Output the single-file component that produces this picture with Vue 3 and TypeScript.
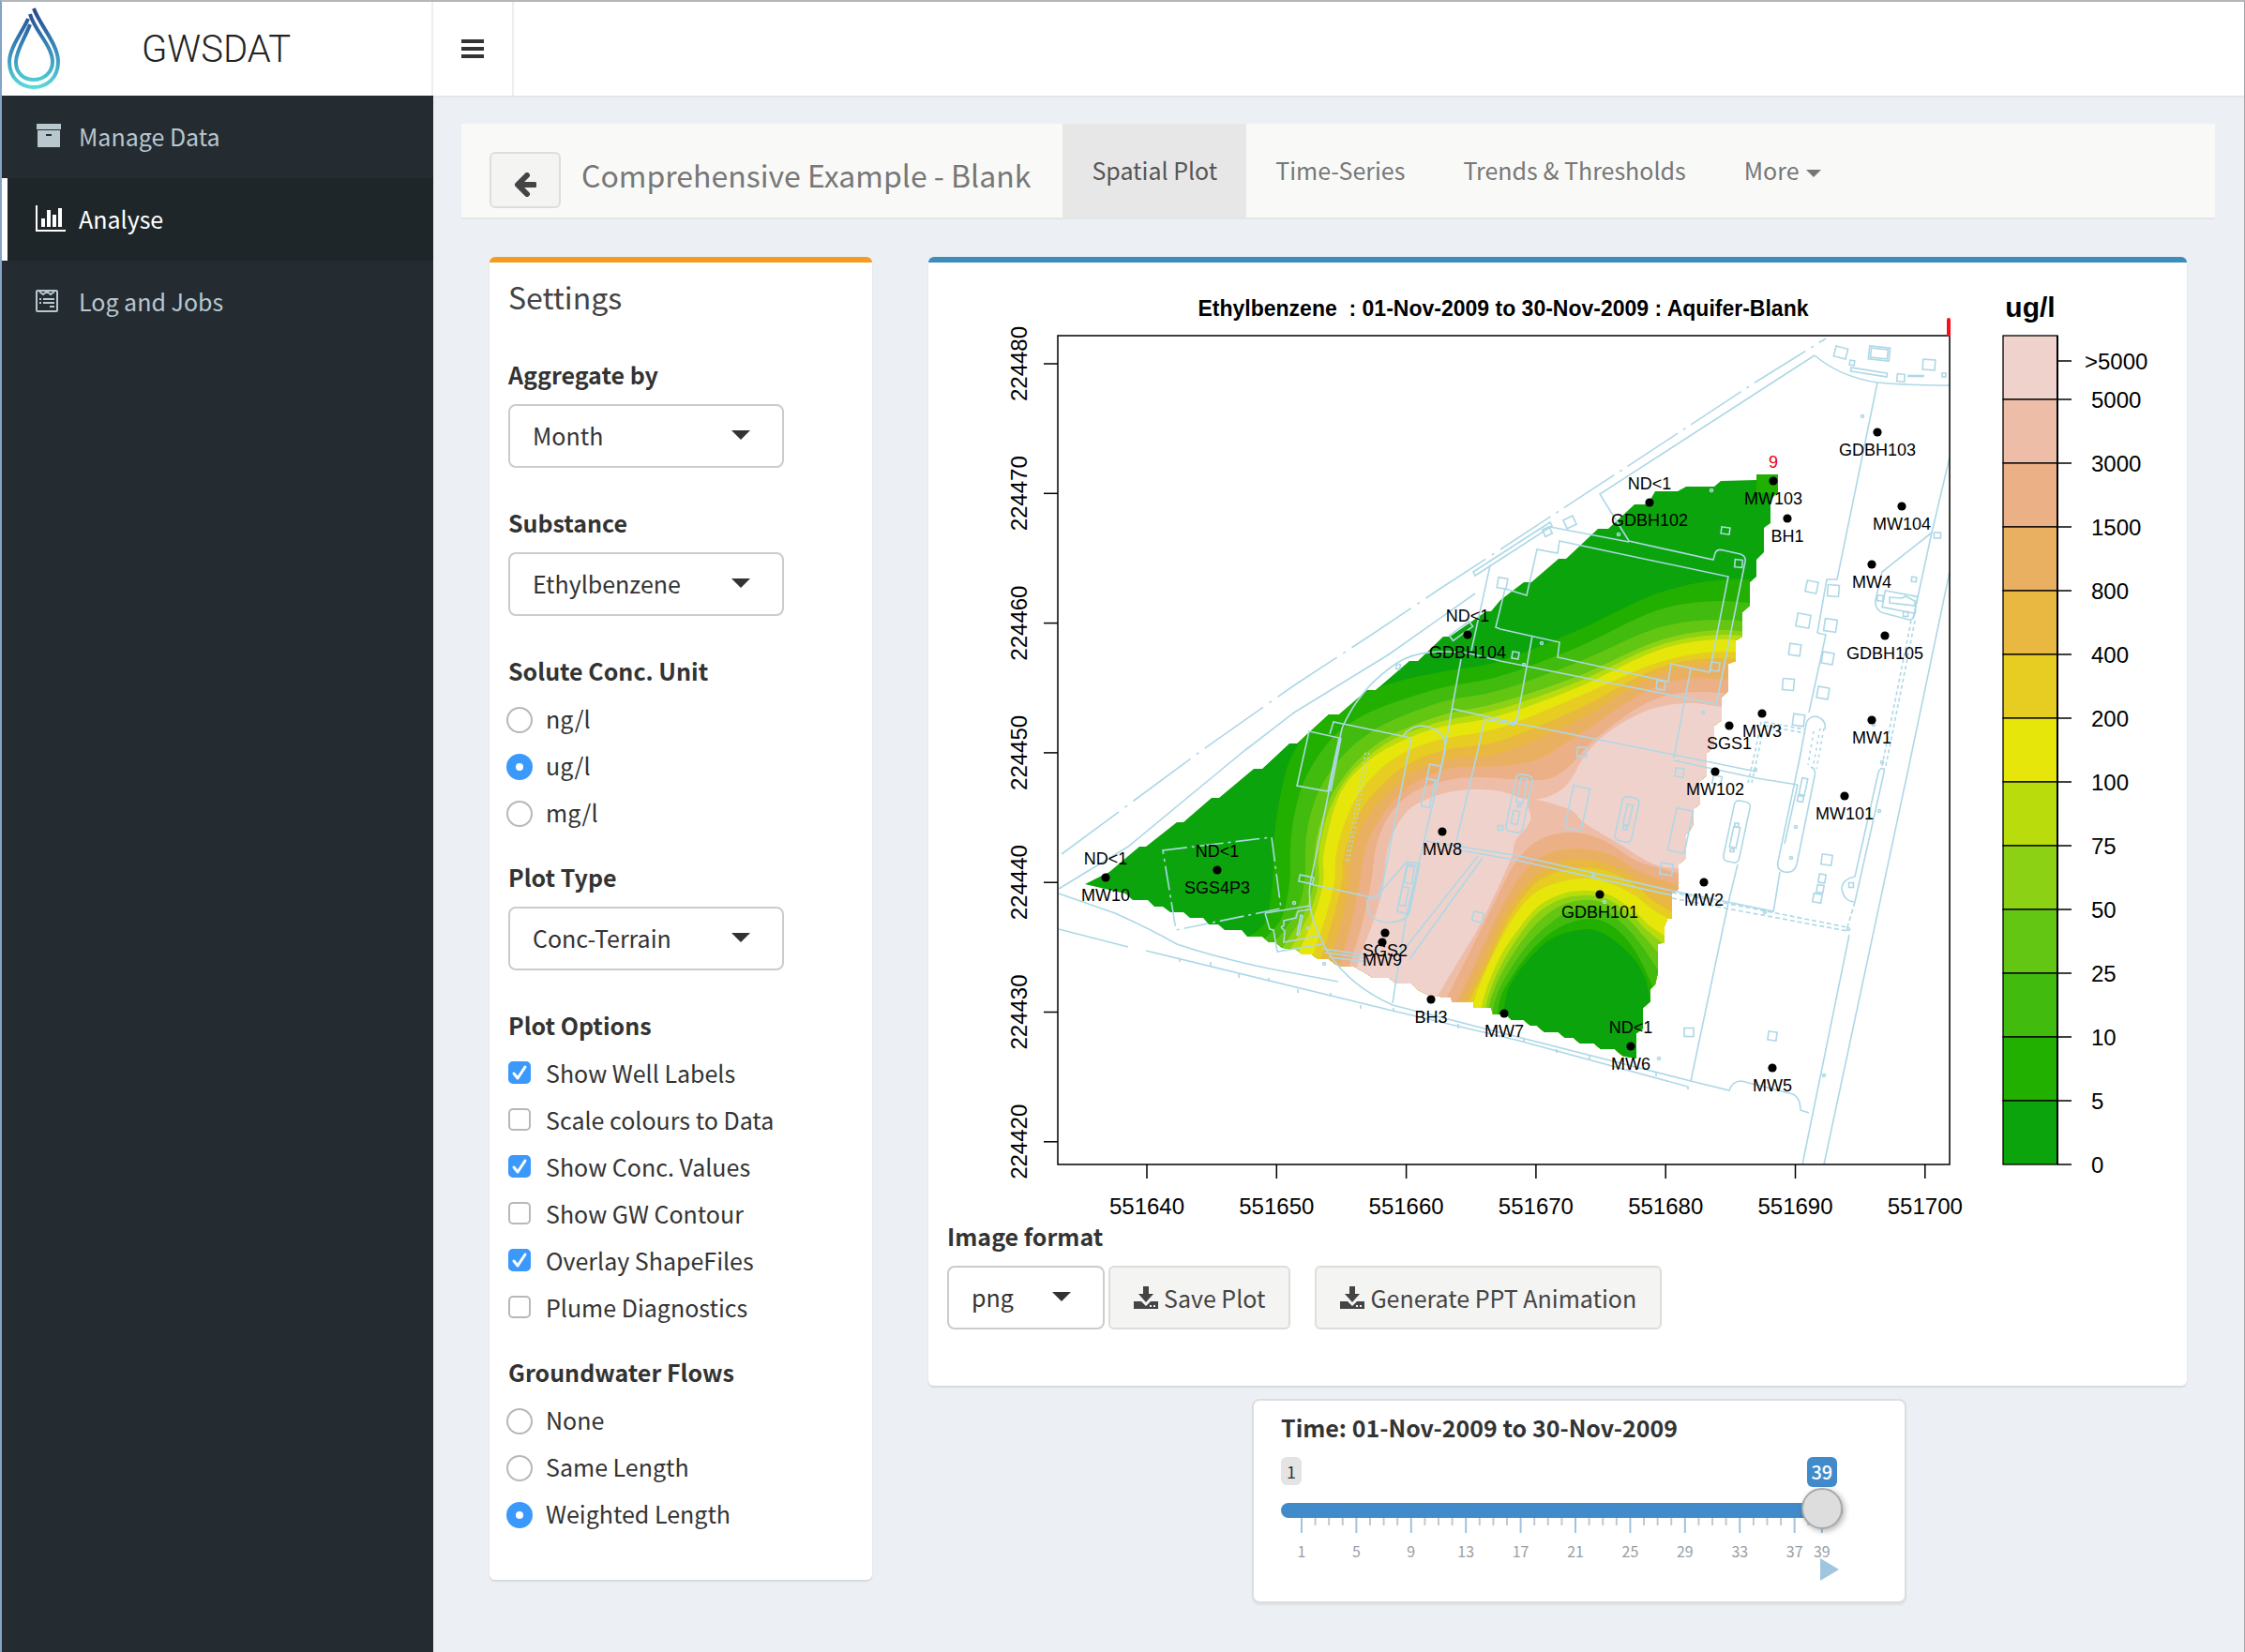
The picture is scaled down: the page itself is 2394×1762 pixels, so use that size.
<script setup lang="ts">
import { ref, computed } from 'vue'

type Point = [number, number]
interface Well { name: string; x: number; y: number; value?: string; detected?: boolean }
interface Level { color: string; points: Point[] }

const aggregate = ref('Month')
const substance = ref('Ethylbenzene')
const unit = ref('ug/l')
const plotType = ref('Conc-Terrain')
const imageFormat = ref('png')
const flow = ref('Weighted Length')
const step = ref(39)
const shown = ref<string[]>(['Show Well Labels', 'Show Conc. Values', 'Overlay ShapeFiles'])

const units = ['ng/l', 'ug/l', 'mg/l']
const plotOptions = ['Show Well Labels', 'Scale colours to Data', 'Show Conc. Values', 'Show GW Contour', 'Overlay ShapeFiles', 'Plume Diagnostics']
const flows = ['None', 'Same Length', 'Weighted Length']

const sliderTicks = Array.from({ length: 39 }, (_, i) => ({
  n: i + 1,
  x: 22 + (i * 557) / 38,
  major: i % 4 === 0 || i === 38,
}))
const badgeLeft = computed(() => `${((step.value - 1) / 38) * 100}%`)

function smooth(points: Point[]): string {
  let d = `M${points[0][0]} ${points[0][1]}`
  for (let i = 0; i < points.length - 1; i++) {
    const a = points[Math.max(i - 1, 0)]
    const b = points[i]
    const c = points[i + 1]
    const e = points[Math.min(i + 2, points.length - 1)]
    const r = (v: number) => Math.round(v * 10) / 10
    d += `C${r(b[0] + (c[0] - a[0]) / 6)} ${r(b[1] + (c[1] - a[1]) / 6)} ${r(c[0] - (e[0] - b[0]) / 6)} ${r(c[1] - (e[1] - b[1]) / 6)} ${c[0]} ${c[1]}`
  }
  return d
}
function parse(text: string): Point[] {
  return text.trim().split(/\s+/).map((p) => p.split(',').map(Number) as Point)
}
function level(color: string, text: string): Level {
  return { color, points: parse(text) }
}

// Concentration classes, highest first, as they are stacked in the key.
const legend = [
  { color: '#f0d2cc', label: '5000' },
  { color: '#eebda8', label: '3000' },
  { color: '#ecb086', label: '1500' },
  { color: '#eab062', label: '800' },
  { color: '#e8b840', label: '400' },
  { color: '#e7cc22', label: '200' },
  { color: '#e6e60b', label: '100' },
  { color: '#b9dc0c', label: '75' },
  { color: '#8dd114', label: '50' },
  { color: '#62c612', label: '25' },
  { color: '#41bb0d', label: '10' },
  { color: '#21af00', label: '5' },
  { color: '#0ca40c', label: '0' },
]

const plume: Level[] = [
  level('#21af00', '1900,622 1840,618 1767,633 1683,672 1600,705 1540,716 1490,727 1440,745 1405,770 1378,805 1365,850 1358,900 1357,941 1348,985 1320,1005'),
  level('#41bb0d', '1900,648 1835,641 1767,651 1683,690 1600,721 1540,733 1490,748 1450,765 1418,790 1392,830 1380,870 1376,905 1375,941 1366,980 1340,1010'),
  level('#62c612', '1900,668 1835,661 1767,670 1683,706 1600,736 1540,748 1490,766 1460,782 1432,806 1408,840 1396,875 1392,905 1391,941 1381,975 1355,1010'),
  level('#8dd114', '1900,680 1835,672 1767,684 1683,721 1600,749 1540,762 1490,781 1460,800 1438,822 1418,852 1406,885 1402,910 1401,941 1390,975 1365,1015'),
  level('#b9dc0c', '1900,684 1835,677 1767,689 1683,727 1600,756 1535,770 1487,788 1458,808 1436,830 1420,858 1411,885 1406,912 1406,941 1396,975 1373,1018'),
  level('#e6e60b', '1900,690 1835,682 1767,694 1683,733 1600,763 1530,777 1483,796 1455,815 1434,838 1423,862 1416,888 1411,915 1411,941 1401,978 1382,1022'),
  level('#e7cc22', '1900,703 1835,695 1767,707 1683,743 1600,776 1535,789 1495,804 1468,824 1448,848 1437,870 1429,893 1424,917 1423,941 1413,980 1397,1028'),
  level('#e8b840', '1900,712 1835,702 1767,713 1683,756 1600,790 1540,800 1502,815 1477,834 1457,856 1445,877 1437,898 1432,920 1431,941 1421,982 1406,1030'),
  level('#eab062', '1900,718 1835,708 1767,720 1683,768 1600,803 1545,810 1508,823 1484,842 1465,862 1452,882 1445,902 1440,922 1438,945 1430,985 1414,1035'),
  level('#ecb086', '1900,738 1835,724 1767,732 1683,784 1640,810 1600,817 1550,819 1514,832 1490,850 1474,870 1462,890 1455,912 1450,941 1441,985 1427,1035'),
  level('#eebda8', '1900,755 1835,739 1767,745 1705,785 1670,820 1643,832 1578,829 1545,832 1515,841 1495,854 1478,875 1467,905 1462,941 1452,988 1437,1035'),
  level('#f0d2cc', '1900,765 1836,754 1800,750 1765,755 1735,768 1710,785 1690,806 1668,840 1635,853 1600,844 1571,842 1545,845 1520,853 1500,866 1485,890 1478,915 1474,950 1463,987 1453,1013 1445,1036'),
]
const hollow: Level[] = [
  level('#eebda8', '1525,1075 1542,1047 1560,1017 1578,987 1596,950 1612,914 1616,897 1632,875 1631,853 1673,863 1690,878 1727,900 1767,923 1810,927'),
  level('#ecb086', '1535,1080 1555,1040 1575,1000 1595,960 1612,926 1627,907 1643,895 1667,888 1693,890 1717,900 1743,917 1767,925 1810,937'),
  level('#eab062', '1548,1080 1572,1030 1590,990 1608,955 1625,930 1643,914 1667,906 1695,906 1723,914 1750,930 1800,948'),
  level('#e8b840', '1554,1080 1578,1035 1600,985 1620,953 1640,932 1665,919 1695,917 1720,924 1745,937 1765,948 1800,960'),
  level('#e7cc22', '1560,1080 1583,1035 1606,985 1628,952 1648,935 1672,927 1700,926 1722,932 1745,945 1765,962 1800,982'),
  level('#e6e60b', '1566,1085 1580,1045 1600,1003 1620,970 1640,950 1667,940 1693,937 1717,942 1743,955 1767,973 1800,990'),
  level('#b9dc0c', '1576,1090 1585,1055 1600,1020 1620,990 1640,967 1667,953 1693,950 1717,955 1743,972 1760,988 1790,1008'),
  level('#8dd114', '1580,1095 1588,1060 1602,1027 1622,995 1642,972 1668,958 1694,955 1716,960 1740,976 1757,993 1785,1015'),
  level('#62c612', '1583,1095 1591,1062 1604,1033 1625,1001 1645,979 1669,964 1694,960 1715,965 1737,981 1754,1000 1780,1030'),
  level('#41bb0d', '1589,1097 1595,1065 1608,1038 1628,1009 1648,989 1671,973 1694,968 1714,973 1733,988 1750,1008 1775,1045'),
  level('#21af00', '1594,1099 1600,1065 1612,1042 1631,1016 1651,997 1672,985 1694,980 1713,984 1731,998 1747,1020 1765,1058'),
  level('#0ca40c', '1600,1100 1607,1060 1617,1040 1633,1020 1657,1000 1693,991 1717,1000 1740,1020 1753,1040 1759,1063 1762,1085'),
]

const hull =
  '1157,943 1183,930 1215,903 1222,903 1255,877 1262,877 1292,851 1300,851 1337,820 1346,820 1375,793 1383,793 1417,762 1428,762 1458,736 1467,736 1503,705 1512,705 1539,679 1546,679 1585,652 1590,652 1600,640 1625,621 1633,621 1662,596 1670,596 1704,564 1715,564 1743,538 1757,538 1765,524 1789,524 1798,519 1828,519 1835,513 1873,512 1873,506 1896,506 1896,525 1888,533 1888,558 1881,563 1881,589 1873,597 1873,615 1866,621 1866,646 1858,653 1858,679 1851,683 1851,705 1843,708 1843,737 1836,744 1836,768 1828,774 1828,797 1820,803 1820,827 1813,833 1813,857 1806,863 1805,882 1798,890 1798,915 1790,922 1790,948 1783,953 1783,979 1778,980 1775,988 1775,1005 1768,1007 1768,1037 1765,1050 1760,1055 1760,1068 1752,1075 1752,1097 1745,1102 1745,1129 1730,1126 1722,1119 1707,1119 1700,1113 1685,1113 1678,1107 1669,1107 1662,1101 1647,1101 1639,1094 1632,1094 1625,1088 1612,1088 1606,1082 1592,1082 1590,1075 1572,1075 1571,1069 1549,1069 1547,1064 1524,1062 1512,1056 1505,1049 1489,1049 1481,1043 1464,1043 1453,1036 1444,1031 1426,1030 1417,1023 1405,1023 1399,1018 1389,1018 1381,1012 1367,1011 1360,1005 1353,1005 1346,999 1330,999 1324,992 1306,992 1299,986 1289,986 1283,979 1269,979 1262,973 1248,973 1240,967 1231,967 1224,960 1208,960 1200,953 1178,948'

const wells: Well[] = [
  { name: 'GDBH103', x: 2002, y: 461 },
  { name: 'MW104', x: 2028, y: 540 },
  { name: 'MW4', x: 1996, y: 602 },
  { name: 'GDBH105', x: 2010, y: 678 },
  { name: 'MW1', x: 1996, y: 768 },
  { name: 'MW3', x: 1879, y: 761 },
  { name: 'SGS1', x: 1844, y: 774 },
  { name: 'BH1', x: 1906, y: 553 },
  { name: 'MW103', x: 1891, y: 513, value: '9', detected: true },
  { name: 'GDBH102', x: 1759, y: 536, value: 'ND<1' },
  { name: 'GDBH104', x: 1565, y: 677, value: 'ND<1' },
  { name: 'MW102', x: 1829, y: 823 },
  { name: 'MW101', x: 1967, y: 849 },
  { name: 'MW2', x: 1817, y: 941 },
  { name: 'GDBH101', x: 1706, y: 954 },
  { name: 'MW6', x: 1739, y: 1116, value: 'ND<1' },
  { name: 'MW5', x: 1890, y: 1139 },
  { name: 'MW7', x: 1604, y: 1081 },
  { name: 'MW8', x: 1538, y: 887 },
  { name: 'MW10', x: 1179, y: 936, value: 'ND<1' },
  { name: 'SGS4P3', x: 1298, y: 928, value: 'ND<1' },
  { name: 'SGS2', x: 1477, y: 995 },
  { name: 'MW9', x: 1474, y: 1005 },
  { name: 'BH3', x: 1526, y: 1066 },
]

const yTicks = [224480, 224470, 224460, 224450, 224440, 224430, 224420].map((v, i) => ({ v, y: 388 + i * 138.3 }))
const xTicks = [551640, 551650, 551660, 551670, 551680, 551690, 551700].map((v, i) => ({ v, x: 1223 + i * 138.3 }))

// Site survey: solid lines, then broken lines, then buildings as [x, y, width, height, angle, radius].
const siteLines = [
  'M1129 948L1203 903L1289 832L1328 800L1380 760L1481 698L1573 633',
  'M1571 610L1653 557L1655 561L1573 614Z',
  'M1653 562L1737 578M1935 379L1706 527L1737 577L1827 597L1829 590Q1831 585 1838 587L1856 591Q1862 593 1861 599L1830 752',
  'M1935 379Q1962 402 2002 408Q2035 411 2079 411',
  'M2002 408L1959 618H1948L1938 675L1947 677L1929 760',
  'M1663 577L1843 615L1823 717L1782 708L1779 727L1661 701L1663 685L1600 671L1595 669L1605 628L1628 635L1639 586L1661 590Z',
  'M1567 697L1600 705L1830 751M1589 603L1569 694M1558 703L1537 818L1499 980L1485 1070',
  'M1634 678L1617 772M1549 756L1620 772L1785 805L1873 823M1785 811L1873 830L1917 837M1803 713L1785 808',
  'M1569 697Q1515 690 1490 707Q1450 733 1431 777L1422 820L1397 943Q1394 970 1405 993Q1425 1045 1485 1072L1583 1097L1803 1153L1844 1163Q1847 1153 1857 1153L1912 1167Q1920 1171 1920 1184L1929 1187',
  'M1129 991L1203 1010M1222 1014L1485 1078L1620 1110L1800 1159V1162',
  'M1129 953L1189 974Q1225 990 1255 1007Q1300 1022 1353 1033L1427 1047',
  'M1396 780L1428 787L1416 844L1383 838ZM1418 783L1422 770L1505 787L1471 960M1430 787L1419 844',
  'M1496 785Q1504 774 1517 774Q1543 778 1541 800L1537 818M1576 800L1553 897M1576 800L1583 767L1615 773L1617 765',
  'M1521 897L1620 913L1783 950L1891 972M1553 906L1620 918L1783 955',
  'M1576 913L1494 1017M1581 915L1503 1023',
  'M1397 943L1467 958M1467 957L1458 960Q1456 984 1483 984Q1500 982 1503 973L1514 921L1500 919Z',
  'M1349 974L1397 966M1349 974L1354 991L1358 992L1362 1015L1410 1007M1366 989L1369 987V982L1382 979L1384 972L1397 970M1366 989L1370 993L1369 1005L1406 998M1387 976L1389 977L1385 997H1383Z',
  'M1410 1012L1455 1018M1413 1016L1458 1022M1417 1021L1460 1026',
  'M2079 488L2060 568L2040 660M2079 610L2035 820L1945 1242M1972 997L1922 1242',
  'M2060 568L2007 610L2000 640Q1999 651 2009 654L2036 661Q2041 662 2043 650',
  'M2003 824L1978 935M2009 824L1978 962M2003 824Q2005 818 2009 820V824M1978 935Q1964 938 1964 948Q1966 961 1977 962',
  'M1853 922L1843 963L1803 1153M1898 930L1891 973',
  'M1917 820L1926 772Q1928 764 1937 764Q1948 768 1946 778M1921 800L1896 919Q1894 928 1903 930Q1913 932 1916 922L1935 828Q1937 820 1931 818',
  'M1917 837L1903 900',
  'M1258 1022V1026M1291 1031V1026M1321 1039V1043M1353 1047V1043M1384 1055V1059M1419 1063V1059M1451 1072V1076M1486 1079V1075M1555 1097V1092M1625 1108V1112M1660 1119V1123M1695 1126V1130M1766 1144V1148',
  'M2028 638L2032 636L2042 641V646L2015 643V637Z',
]
const brokenLines = [
  { d: 'M1132 911L1282 800L1380 731L1464 676L1537 627L1600 586', dash: '76 8 3 8' },
  { d: 'M1600 586L1664 544L1733 499L1803 453L1873 407L1947 361', dash: '64 7 3 7' },
  { d: 'M1240 907L1356 893L1366 969L1254 992Z', dash: '26 5 3 5' },
  { d: 'M2038 662L2007 817M2042 662L2011 817', dash: '4 3' },
  { d: 'M1882 770L1925 778M1882 774L1925 782M1882 770L1868 835M1878 770L1872 800L1864 835', dash: '4 3' },
  { d: 'M1945 777L1937 820M1941 777L1933 820M1934 780L1928 816', dash: '3 4' },
  { d: 'M1783 952L1970 989M1783 958L1970 993M1978 962L1970 989', dash: '5 3' },
  { d: 'M1456 803L1435 920M1460 803L1438 920', dash: '2 3' },
]
const buildings: number[][] = [
  [1932, 626, 12, 12, 12, 0], [1955, 630, 12, 12, 5, 0], [1923, 662, 14, 14, 10, 0], [1952, 667, 13, 13, 8, 0],
  [1914, 693, 12, 12, 8, 0], [1949, 702, 12, 12, 10, 0], [1907, 730, 12, 12, 5, 0], [1944, 739, 12, 12, 10, 0],
  [1918, 768, 12, 12, 8, 0], [1963, 376, 13, 11, 14, 0], [2004, 377, 22, 14, 6, 0], [2004, 377, 18, 10, 6, 0],
  [2057, 389, 13, 11, 4, 0], [2027, 403, 8, 8, 5, 0], [2073, 400, 4, 4, 0, 0], [1975, 387, 5, 5, 8, 0],
  [1993, 397, 39, 4, 9, 0], [2043, 401, 16, 1, 0, 0], [1674, 557, 11, 10, -25, 0], [1650, 567, 8, 8, -25, 0],
  [1840, 566, 9, 7, 8, 0], [1854, 601, 8, 8, 5, 0], [1616, 699, 7, 7, 10, 0], [1771, 731, 9, 9, 5, 0],
  [1829, 711, 9, 9, 8, 0], [1687, 802, 10, 10, 5, 0], [2041, 618, 5, 5, 8, 0], [2066, 571, 7, 6, 0, 0],
  [1791, 824, 9, 9, 8, 0], [1831, 832, 9, 9, 12, 0], [1777, 927, 13, 12, 8, 0], [1948, 917, 11, 11, 8, 0],
  [1943, 937, 7, 9, 10, 0], [1941, 948, 7, 8, 10, 0], [1938, 958, 9, 9, 10, 0], [1801, 1101, 10, 9, 0, 0],
  [1890, 1105, 9, 9, 8, 0], [1974, 944, 5, 5, 0, 0], [1576, 978, 11, 10, 14, 0], [1602, 622, 10, 11, 10, 0],
  [1393, 938, 15, 7, 12, 0], [1558, 673, 26, 7, -36, 0], [1491, 711, 4, 5, 10, 0], [1600, 883, 5, 5, 0, 0],
  [1852, 887, 17, 66, 12, 5], [1850, 893, 7, 22, 12, 0], [1852, 880, 4, 4, 0, 0], [1847, 907, 4, 3, 0, 0],
  [1735, 874, 18, 48, 12, 5], [1736, 869, 6, 22, 12, 0], [1733, 883, 4, 4, 0, 0],
  [1620, 857, 18, 62, 12, 5], [1623, 843, 7, 26, 12, 0], [1616, 872, 7, 14, 12, 0], [1620, 859, 3, 3, 0, 0],
  [1682, 862, 18, 46, 12, 0], [1792, 886, 18, 46, 12, 0], [1923, 839, 6, 18, 12, 0], [1920, 852, 6, 6, 12, 0],
  [2026, 642, 35, 18, 11, 0], [2005, 638, 6, 6, 5, 0], [2032, 655, 5, 5, 0, 0], [1529, 824, 12, 16, 12, 0],
  [1523, 846, 9, 30, 12, 0], [1503, 933, 8, 18, 10, 0], [1497, 956, 7, 20, 12, 0], [1501, 948, 12, 52, 12, 0],
]
const surveyMarks: Point[] = [[1986, 444], [1825, 523], [1625, 709], [1816, 760], [1872, 821], [1699, 934], [1882, 973], [1971, 991], [2007, 813], [1769, 1129], [1945, 1147], [1412, 1028], [1711, 962], [1915, 882], [2004, 865], [1910, 915], [1998, 773], [1644, 686], [1726, 570], [1380, 963], [1395, 990]]
</script>

<template>
  <div class="page">
    <header class="top">
      <a class="brand" href="#">
        <svg class="logo" width="58" height="90" viewBox="7 8 58 90" aria-hidden="true">
          <defs>
            <linearGradient id="drop" x1="0" y1="8" x2="0" y2="98" gradientUnits="userSpaceOnUse">
              <stop offset="0" stop-color="#2a4586" />
              <stop offset="0.3" stop-color="#2f6cab" />
              <stop offset="0.7" stop-color="#43a9c6" />
              <stop offset="1" stop-color="#5ce2dc" />
            </linearGradient>
          </defs>
          <g fill="none" stroke="url(#drop)" stroke-width="4">
            <path d="M36 10C42 27 62 48 62 67C62 84 50 94 36 94C22 94 10 84 10 67C10 52 24 35 30 21" />
            <path d="M32 16C37 34 56 50 56 67C56 79 46 86 36 86C25 86 17 79 17 67C17 55 27 41 32 27" />
          </g>
        </svg>
        <span class="name">GWSDAT</span>
      </a>
      <button class="toggle" type="button" aria-label="Toggle navigation">
        <svg width="24" height="20" viewBox="0 0 24 20"><path d="M0 0h24v4H0zM0 8h24v4H0zM0 16h24v4H0z" fill="#333" /></svg>
      </button>
    </header>

    <div class="body">
      <nav class="side" aria-label="Main">
        <a href="#">
          <svg width="32" height="28" viewBox="0 0 32 28" fill="#b8c7ce">
            <path d="M1 1h26v6H1zM2 8h24v18H2z" /><path d="M11 12h6v2h-6z" fill="#242b31" />
          </svg>
          Manage Data
        </a>
        <a href="#" class="active">
          <svg width="32" height="28" viewBox="0 0 32 28" fill="#fff">
            <path d="M0 0h2v26h30v2H0zM6 14h4v9H6zM12 5h4v18h-4zM18 10h4v13h-4zM24 3h4v20h-4z" />
          </svg>
          Analyse
        </a>
        <a href="#">
          <svg width="32" height="28" viewBox="0 0 32 28" fill="none" stroke="#b8c7ce" stroke-width="2">
            <rect x="1" y="3" width="22" height="22" rx="1" />
            <path d="M4 4l4 3 4-3 4 3 4-3M4 12h2M8 12h12M4 16h2M8 16h12M15 20h5" />
          </svg>
          Log and Jobs
        </a>
      </nav>

      <main class="content">
        <nav class="tabs" aria-label="Analysis">
          <button class="btn back" type="button" aria-label="Back">
            <svg width="24" height="26" viewBox="0 0 24 26"><path d="M14 3L4 13L14 23M5 13H22" fill="none" stroke="#444" stroke-width="6" stroke-linecap="round" stroke-linejoin="round" /></svg>
          </button>
          <span class="title">Comprehensive Example - Blank</span>
          <a href="#" class="current">Spatial Plot</a>
          <a href="#">Time-Series</a>
          <a href="#">Trends &amp; Thresholds</a>
          <a href="#">More <svg width="16" height="8" viewBox="0 0 16 8"><path d="M0 0h16l-8 8z" fill="#777" /></svg></a>
        </nav>

        <div class="columns">
          <section class="box settings">
            <h3>Settings</h3>

            <label class="head" for="aggregate">Aggregate by</label>
            <span class="pick">
              <select id="aggregate" v-model="aggregate"><option>Month</option><option>Quarter</option></select>
              <svg width="20" height="10" viewBox="0 0 20 10"><path d="M0 0h20l-10 10z" /></svg>
            </span>

            <label class="head" for="substance">Substance</label>
            <span class="pick">
              <select id="substance" v-model="substance"><option>Ethylbenzene</option><option>Toluene</option></select>
              <svg width="20" height="10" viewBox="0 0 20 10"><path d="M0 0h20l-10 10z" /></svg>
            </span>

            <fieldset>
              <legend class="head">Solute Conc. Unit</legend>
              <label v-for="u in units" :key="u" class="choice"><input v-model="unit" type="radio" name="unit" :value="u" />{{ u }}</label>
            </fieldset>

            <label class="head" for="plot-type">Plot Type</label>
            <span class="pick">
              <select id="plot-type" v-model="plotType"><option>Conc-Terrain</option><option>Conc-Topo</option></select>
              <svg width="20" height="10" viewBox="0 0 20 10"><path d="M0 0h20l-10 10z" /></svg>
            </span>

            <fieldset>
              <legend class="head">Plot Options</legend>
              <label v-for="o in plotOptions" :key="o" class="choice">
                <span class="tick">
                  <input v-model="shown" type="checkbox" :value="o" />
                  <svg v-if="shown.includes(o)" width="24" height="24" viewBox="0 0 24 24"><path d="M6 13l4 5 8-12" fill="none" stroke="#fff" stroke-width="3" stroke-linecap="round" stroke-linejoin="round" /></svg>
                </span>{{ o }}
              </label>
            </fieldset>

            <fieldset>
              <legend class="head">Groundwater Flows</legend>
              <label v-for="f in flows" :key="f" class="choice"><input v-model="flow" type="radio" name="flow" :value="f" />{{ f }}</label>
            </fieldset>
          </section>

          <div class="right">
            <section class="box plot">
              <svg class="map" viewBox="1010 280 1302 1020" role="img" aria-label="Ethylbenzene concentration map">
                <defs>
                  <clipPath id="hull"><polygon :points="hull" /></clipPath>
                </defs>
                <g clip-path="url(#hull)">
                  <rect x="1150" y="500" width="760" height="640" fill="#0ca40c" />
                  <path v-for="(l, i) in plume" :key="'p' + i" :d="smooth(l.points) + 'V1200H1900Z'" :fill="l.color" />
                  <path v-for="(l, i) in hollow" :key="'h' + i" :d="smooth(l.points) + 'V1200H1525Z'" :fill="l.color" />
                  <rect x="1873" y="500" width="24" height="26" fill="#21af00" />
                </g>

                <g v-if="shown.includes('Overlay ShapeFiles')" fill="none" stroke="#add8e6" stroke-width="1.6">
                  <path v-for="(d, i) in siteLines" :key="'s' + i" :d="d" />
                  <path v-for="(b, i) in brokenLines" :key="'b' + i" :d="b.d" :stroke-dasharray="b.dash" />
                  <rect
                    v-for="(b, i) in buildings" :key="'r' + i"
                    :x="b[0] - b[2] / 2" :y="b[1] - b[3] / 2" :width="b[2]" :height="b[3]" :rx="b[5]"
                    :transform="`rotate(${b[4]} ${b[0]} ${b[1]})`"
                  />
                  <circle v-for="(m, i) in surveyMarks" :key="'m' + i" :cx="m[0]" :cy="m[1]" r="1.5" />
                </g>

                <g fill="none" stroke="#000" stroke-width="1.5">
                  <rect x="1128" y="358" width="951" height="884" />
                  <path v-for="t in yTicks" :key="t.v" :d="`M1113 ${t.y}H1128`" />
                  <path v-for="t in xTicks" :key="t.v" :d="`M${t.x} 1242V1257`" />
                </g>
                <path d="M2078 341V357" stroke="#fb0d1b" stroke-width="4" stroke-linecap="round" />

                <g class="axis" text-anchor="middle">
                  <text v-for="t in yTicks" :key="t.v" :transform="`translate(1095 ${t.y}) rotate(-90)`">{{ t.v }}</text>
                  <text v-for="t in xTicks" :key="t.v" :x="t.x" y="1295">{{ t.v }}</text>
                </g>
                <text class="caption" x="1603" y="337" text-anchor="middle">{{ substance }}&nbsp; : 01-Nov-2009 to 30-Nov-2009 : Aquifer-Blank</text>

                <g class="wells" text-anchor="middle">
                  <g v-for="w in wells" :key="w.name">
                    <circle :cx="w.x" :cy="w.y" r="4.6" />
                    <text v-if="shown.includes('Show Well Labels')" :x="w.x" :y="w.y + 25">{{ w.name }}</text>
                    <text v-if="w.value && shown.includes('Show Conc. Values')" :x="w.x" :y="w.y - 14" :fill="w.detected ? '#e8000f' : '#000'">{{ w.value }}</text>
                  </g>
                </g>

                <text class="unit" x="2165" y="338" text-anchor="middle">{{ unit }}</text>
                <g class="axis">
                  <rect v-for="(c, i) in legend" :key="c.label" x="2136" :y="358 + i * 68" width="58" height="68" :fill="c.color" stroke="#000" stroke-width="1.3" />
                  <path d="M2194 358V1242" stroke="#000" stroke-width="2" />
                  <path d="M2194 385H2209" stroke="#000" stroke-width="1.5" />
                  <text x="2223" y="394">&gt;5000</text>
                  <g v-for="(c, i) in legend" :key="c.label">
                    <path :d="`M2194 ${426 + i * 68}H2209`" stroke="#000" stroke-width="1.5" />
                    <text x="2230" :y="435 + i * 68">{{ c.label }}</text>
                  </g>
                </g>
              </svg>

              <label class="head" for="format">Image format</label>
              <div class="actions">
                <span class="pick small">
                  <select id="format" v-model="imageFormat"><option>png</option><option>jpg</option><option>pdf</option></select>
                  <svg width="20" height="10" viewBox="0 0 20 10"><path d="M0 0h20l-10 10z" /></svg>
                </span>
                <button class="btn" type="button">
                  <svg width="26" height="26" viewBox="0 0 26 26" fill="#444"><path d="M10 1h6v8h5l-8 9-8-9h5z" /><path d="M0 17h8l5 5 5-5h8v8H0zM17 21v2h2v-2zM21 21v2h2v-2z" fill-rule="evenodd" /></svg>
                  Save Plot
                </button>
                <button class="btn generate" type="button">
                  <svg width="26" height="26" viewBox="0 0 26 26" fill="#444"><path d="M10 1h6v8h5l-8 9-8-9h5z" /><path d="M0 17h8l5 5 5-5h8v8H0zM17 21v2h2v-2zM21 21v2h2v-2z" fill-rule="evenodd" /></svg>
                  Generate PPT Animation
                </button>
              </div>
            </section>

            <section class="time">
              <label class="head" for="step">Time: 01-Nov-2009 to 30-Nov-2009</label>
              <div class="slider">
                <div class="badges">
                  <span class="min">1</span>
                  <span class="rail"><output class="now" for="step" :style="{ left: badgeLeft }">{{ step }}</output></span>
                </div>
                <input id="step" v-model.number="step" type="range" min="1" max="39" />
                <svg class="scale" viewBox="0 0 601 54">
                  <path v-for="t in sliderTicks" :key="t.n" :d="`M${t.x} 0V${t.major ? 16 : 8}`" :stroke="t.major ? '#9fc3df' : '#c4c8cc'" stroke-width="2" />
                  <template v-for="t in sliderTicks" :key="t.n">
                    <text v-if="t.major" :x="t.x" y="42" text-anchor="middle">{{ t.n }}</text>
                  </template>
                </svg>
                <button class="play" type="button" aria-label="Play">
                  <svg width="20" height="24" viewBox="0 0 20 24"><path d="M0 0l20 12L0 24z" fill="#9fc6de" /></svg>
                </button>
              </div>
            </section>
          </div>
        </div>
      </main>
    </div>
  </div>
</template>

<style>
body { background: #ecf0f5; }
</style>

<style scoped>
* { box-sizing: border-box; }
.page {
  min-height: 100vh;
  display: flex;
  flex-direction: column;
  border-top: 2px solid #b4b8ba;
  border-left: 2px solid #86a3c8;
  border-right: 1px solid #a4a6a8;
  background: #ecf0f5;
  color: #333;
  font-family: "Noto Sans CJK SC", "Noto Sans", sans-serif;
  font-size: 25px;
  line-height: 40px;
}
a { color: inherit; text-decoration: none; }
button, select { font: inherit; color: inherit; }
.top { display: flex; height: 100px; background: #fff; box-shadow: 0 1px 2px rgba(0, 0, 0, 0.08); }
.brand { width: 460px; display: flex; align-items: center; border-right: 2px solid #eee; }
.logo { margin-left: 5px; }
.name { flex: 1; margin-left: 86px; padding-top: 2px; font: 300 40px/60px Roboto, "Liberation Sans", sans-serif; color: #222; }
.toggle { width: 86px; border: 0; border-right: 2px solid #eee; background: none; display: flex; align-items: center; justify-content: center; }
.body { flex: 1; display: flex; }
.side { width: 460px; background: #242b31; color: #b8c7ce; }
.side a { height: 88px; padding: 0 0 2px 36px; display: flex; align-items: center; gap: 14px; }
.side a.active { background: #1f2629; color: #fff; border-left: 6px solid #fff; padding-left: 30px; }
.content { flex: 1; min-width: 0; padding: 30px 31px 50px 30px; }
.tabs { height: 102px; display: flex; background: #f9faf8; border-bottom: 2px solid #e4e6e6; padding-left: 30px; color: #777; }
.tabs a { height: 100px; padding: 0 31px; line-height: 98px; }
.tabs .current { background: #e7e7e7; color: #555; }
.tabs a svg { margin-left: 2px; vertical-align: middle; }
.title { margin: 0 34px 0 22px; font-size: 32px; line-height: 108px; }
.btn { height: 68px; padding: 0 25px; display: flex; align-items: center; gap: 6px; border: 2px solid #ddd; border-radius: 6px; background: #f4f4f2; color: #444; }
.btn.back { width: 76px; height: 60px; margin-top: 30px; padding: 10px 0 0; justify-content: center; }
.columns { display: flex; align-items: flex-start; gap: 60px; padding: 40px 30px 0; }
.box { background: #fff; border-top: 6px solid #3c8dbc; border-radius: 6px; box-shadow: 0 2px 2px rgba(0, 0, 0, 0.1); }
.settings { width: 408px; padding: 16px 20px 46px; border-top-color: #f39c1f; }
h3 { margin: 0 0 43px; font-size: 32px; line-height: 40px; font-weight: 400; color: #444; }
.head { display: block; margin-bottom: 12px; padding: 0; font-weight: 700; }
.pick { position: relative; display: block; width: 294px; margin-bottom: 38px; }
.pick select { appearance: none; width: 100%; height: 68px; padding: 0 24px 2px; border: 2px solid #ccc; border-radius: 8px; background: #fff; }
.pick svg { position: absolute; right: 36px; top: 28px; fill: #333; pointer-events: none; }
fieldset { margin: 0 0 24px; padding: 0; border: 0; }
fieldset .head { margin-bottom: 6px; }
fieldset:last-child { margin-bottom: 0; }
.choice { height: 50px; display: flex; align-items: center; }
.choice input[type="radio"] { appearance: none; width: 28px; height: 28px; margin: 4px 14px 0 -2px; border: 2px solid #b8b8b8; border-radius: 50%; background: #fff; }
.choice input[type="radio"]:checked { border: 10px solid #3b99fc; }
.tick { position: relative; width: 24px; height: 24px; margin-right: 16px; }
.tick input { display: block; appearance: none; width: 24px; height: 24px; margin: 0; border: 2px solid #b8b8b8; border-radius: 5px; background: #fff; }
.tick input:checked { border-color: #3b99fc; background: #3b99fc; }
.tick svg { position: absolute; left: 0; top: 0; pointer-events: none; }
.right { flex: 1; min-width: 0; }
.plot { padding: 0 20px 60px; }
.map { display: block; width: 100%; margin-bottom: -2px; }
.map text { font-family: "Liberation Sans", Arial, sans-serif; }
.axis text { font-size: 24px; }
.wells text { font-size: 18px; }
.map .caption { font-size: 23px; font-weight: 700; }
.map .unit { font-size: 30px; font-weight: 700; }
.actions { display: flex; }
.pick.small { width: 168px; margin: 0 4px 0 0; }
.btn.generate { margin-left: 26px; }
.time { width: 52%; margin: 14px 0 0 345px; padding: 8px 66px 22px 29px; border: 2px solid #ddd; border-radius: 8px; background: #fff; box-shadow: 0 2px 2px rgba(0, 0, 0, 0.06); }
.badges { height: 32px; display: flex; font-size: 18px; line-height: 30px; }
.min { width: 22px; height: 30px; border-radius: 6px; background: #e4e4e4; text-align: center; }
.rail { position: relative; flex: 1; margin-right: 22px; }
.now { position: absolute; width: 32px; height: 32px; margin-left: -16px; border-radius: 6px; background: #428bca; color: #fff; font-size: 20px; line-height: 32px; text-align: center; font-weight: 500; }
.slider { display: flex; flex-direction: column; }
.slider input { position: relative; z-index: 1; appearance: none; width: 100%; height: 48px; margin: 1px 0 0; background: none; }
.slider input::-webkit-slider-runnable-track { height: 16px; border-radius: 8px; background: #428bca; }
.slider input::-webkit-slider-thumb { appearance: none; width: 44px; height: 44px; margin-top: -16px; border: 2px solid #aaa; border-radius: 50%; background: #ddd; box-shadow: 2px 2px 6px rgba(0, 0, 0, 0.3); }
.scale { display: block; width: 100%; margin-top: -16px; fill: #999ea3; font-size: 16px; }
.play { align-self: flex-end; height: 24px; margin: -11px 4px 0 0; padding: 0; border: 0; background: none; line-height: 0; }
</style>
